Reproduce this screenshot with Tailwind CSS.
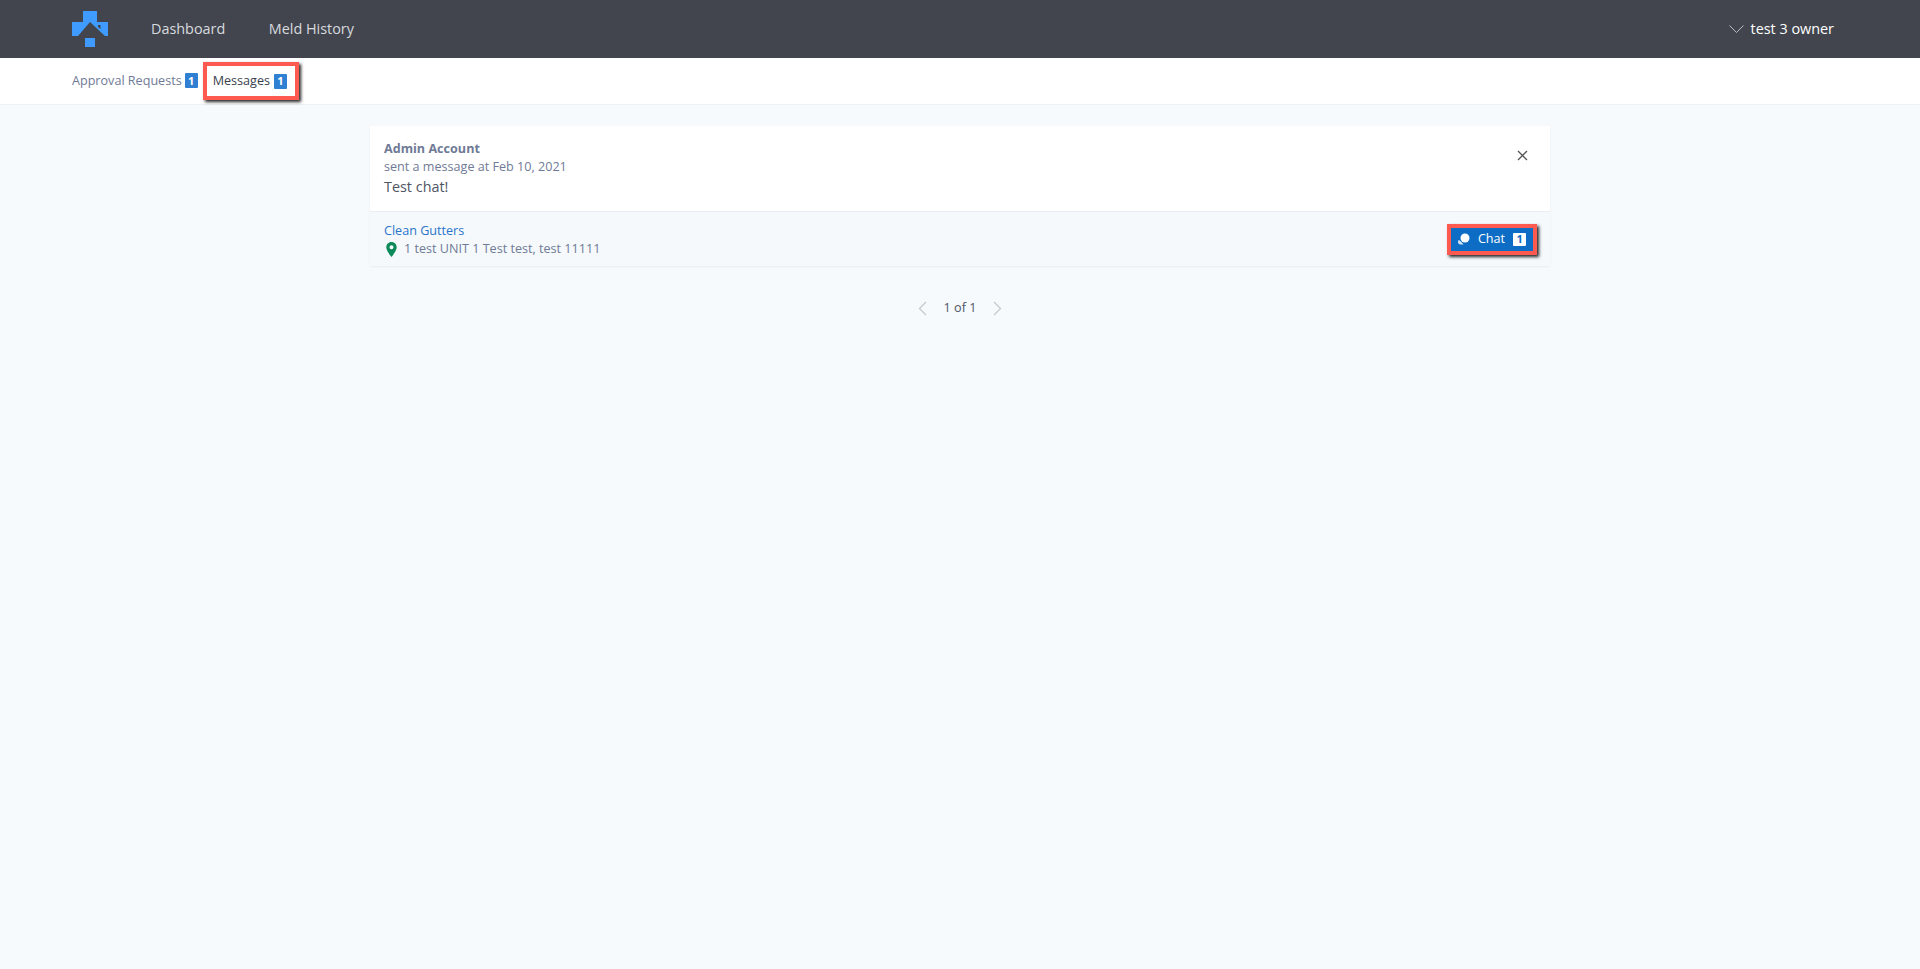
<!DOCTYPE html>
<html>
<head>
<meta charset="utf-8">
<script src="https://cdn.jsdelivr.net/npm/@tailwindcss/browser@4"></script>
</head>
<body class="bg-[#f6fafd] font-['Open_Sans',sans-serif] min-h-[969px]">
<header class="h-[58px] bg-[#42454e] flex items-center pl-[72px] pr-[86px]">
  <svg class="w-[36px] h-[36px]" viewBox="0 0 36 36"><path fill="#3f9bff" d="M11 0h14v11h11v14h-3L18 11 6 25H0V11h11z"/><path fill="#3f9bff" d="M13 27h10v9H13z"/><path fill="#42454e" d="M26 14h2.500v4L26 16z"/></svg>
  <nav class="flex items-center ml-[43px] gap-[43.500px] text-[14.4px] text-[#d8dade] -mt-[1px]">
    <a>Dashboard</a>
    <a>Meld History</a>
  </nav>
  <div class="ml-auto flex items-center gap-[7px] text-[14.4px] text-white font-[500] -mt-[1px]">
    <svg class="w-[15px] h-[9px] mt-[2px]" viewBox="0 0 15 9" fill="none" stroke="#b9bbc0" stroke-width="1"><path d="M.5 .5l7 7 7-7"/></svg>
    <span>test 3 owner</span>
  </div>
</header>
<div class="h-[47px] bg-white border-b border-[#edf1f6] flex items-center pl-[72px] text-[12.6px]">
  <a class="text-[#6f7a96] flex items-center gap-[3px]">Approval Requests <span class="w-[13px] h-[15px] bg-[#2f7fd3] rounded-[1px] text-white text-[11px] font-bold flex items-center justify-center">1</span></a>
  <a class="ml-[5px] h-[38px] w-[96px] border-[4px] border-[#ff5a4f] shadow-[2px_2px_3px_rgba(0,0,0,0.85)] text-[#3a3f4c] flex items-center gap-[4px] pl-[6px]">Messages <span class="w-[13px] h-[15px] bg-[#2f7fd3] rounded-[1px] text-white text-[11px] font-bold flex items-center justify-center">1</span></a>
</div>
<main class="w-[1180px] ml-[370px] mt-[21px]">
  <section class="shadow-[0_1px_2px_rgba(40,70,110,0.08)] rounded-[2px]">
    <div class="h-[86px] bg-white border-b border-[#e9eef4] pl-[14px] pr-[22px] pt-[14px] flex justify-between">
      <div>
        <div class="text-[12.6px] leading-[18px] font-bold text-[#6f7a96]">Admin Account</div>
        <div class="text-[12.6px] leading-[18px] text-[#6f7a96]">sent a message at Feb 10, 2021</div>
        <div class="text-[14.4px] leading-[22px] text-[#4f5563]">Test chat!</div>
      </div>
      <svg class="w-[11px] h-[11px] mt-[10px]" viewBox="0 0 11 11" fill="none" stroke="#555" stroke-width="1.300"><path d="M1 1l9 9M10 1l-9 9"/></svg>
    </div>
    <div class="h-[54px] bg-[#f5f9fc] pl-[14px] pr-[13px] flex items-center justify-between">
      <div class="pt-[2px]">
        <div class="text-[12.6px] leading-[18px] text-[#2a74c9]">Clean Gutters</div>
        <div class="text-[12.6px] leading-[18px] text-[#6f7a96] flex items-center gap-[7px] pl-[2px]">
          <svg class="w-[11px] h-[15px]" viewBox="0 0 11 15"><path fill="#0d8a5a" fill-rule="evenodd" d="M5.500 0C2.500 0 .3 2.300.3 5.200c0 3.500 5.200 9.800 5.200 9.800s5.200-6.300 5.200-9.800C10.700 2.300 8.500 0 5.500 0zm0 3.300a2 2 0 1 1 0 4 2 2 0 0 1 0-4z"/></svg>
          <span>1 test UNIT 1 Test test, test 11111</span>
        </div>
      </div>
      <button class="w-[90px] h-[31px] bg-[#0d6cc4] border-[4px] border-[#ff5a4f] shadow-[2px_2px_3px_rgba(0,0,0,0.85)] flex items-center justify-center text-white text-[12.6px] gap-[8px]">
        <svg class="w-[12px] h-[12px]" viewBox="0 0 12 12"><circle cx="7" cy="5" r="4.500" fill="#fff"/><path fill="#cfe3f6" d="M1 7a2.500 2.500 0 0 0 1 4.500h3.500L3.500 9z"/></svg>
        <span>Chat</span>
        <span class="w-[13px] h-[13px] bg-white text-[#0d6cc4] rounded-[1px] text-[11px] font-bold flex items-center justify-center">1</span>
      </button>
    </div>
  </section>
  <div class="mt-[33px] flex items-center justify-center gap-[17px] text-[12.6px] text-[#4f5563]">
    <svg class="w-[9px] h-[15px]" viewBox="0 0 9 15" fill="none" stroke="#c4c8cc" stroke-width="1.200"><path d="M8 1L1.500 7.500 8 14"/></svg>
    <span>1 of 1</span>
    <svg class="w-[9px] h-[15px]" viewBox="0 0 9 15" fill="none" stroke="#c4c8cc" stroke-width="1.200"><path d="M1 1l6.500 6.500L1 14"/></svg>
  </div>
</main>
</body>
</html>
